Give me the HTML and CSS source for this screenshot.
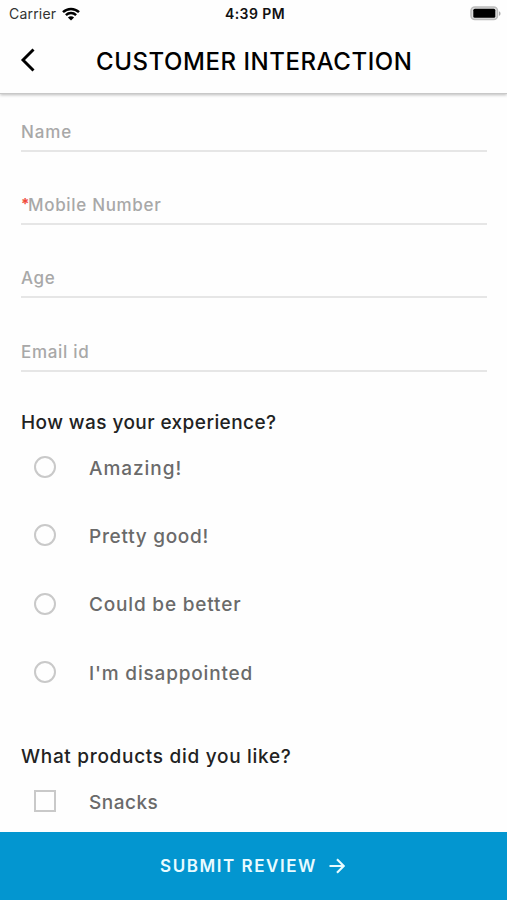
FILE: index.html
```html
<!DOCTYPE html>
<html lang="en">
<head>
<meta charset="utf-8">
<title>Customer Interaction</title>
<link rel="stylesheet" href="styles.css">
</head>
<body>
<div class="screen">
  <div class="status">
    <div class="carrier"><span>Carrier</span>
      <svg class="wifi" width="18" height="14" viewBox="0 0 18 14" fill="none" stroke="#000" stroke-width="2.5"><path d="M1 5.200C5.500.8 12.500.8 17 5.200M3.900 8.200c2.900-2.800 7.300-2.800 10.200 0"/><path d="M9 13.500 5.900 10.400c1.700-1.600 4.500-1.600 6.200 0z" fill="#000" stroke="none"/></svg>
    </div>
    <span class="time">4:39 PM</span>
    <svg class="battery" width="31" height="15" viewBox="0 0 31 15"><rect x="1" y="1" width="26.500" height="12.500" rx="3.800" fill="#ddd" stroke="#bcbcbc" stroke-width="1.500"/><rect x="3.300" y="2.800" width="22" height="9" rx="1.500" fill="#000"/><path d="M29 5.200c2 .8 2 3.800 0 4.600z" fill="#aaa"/></svg>
  </div>
  <header class="header">
    <svg class="back" width="16" height="24" viewBox="0 0 16 24" fill="none" stroke="#000" stroke-width="2.900"><path d="M13.500 1.500 3 12l10.500 10.500"/></svg>
    <h1 class="title">CUSTOMER INTERACTION</h1>
  </header>
  <main class="content">
    <div class="field"><span class="label name">Name</span></div>
    <div class="field"><span class="required">*</span><span class="label mobile">Mobile Number</span></div>
    <div class="field"><span class="label age">Age</span></div>
    <div class="field"><span class="label email">Email id</span></div>
    <h2 class="question experience">How was your experience?</h2>
    <div class="options">
      <div class="option"><span class="radio"></span><span class="amazing">Amazing!</span></div>
      <div class="option"><span class="radio"></span><span class="good">Pretty good!</span></div>
      <div class="option"><span class="radio"></span><span class="better">Could be better</span></div>
      <div class="option"><span class="radio"></span><span class="disappointed">I'm disappointed</span></div>
    </div>
    <h2 class="question products">What products did you like?</h2>
    <div class="options">
      <div class="option"><span class="checkbox"></span><span class="snacks">Snacks</span></div>
    </div>
  </main>
  <footer class="submit"><span>SUBMIT REVIEW</span>
    <svg width="16" height="16" viewBox="0 0 16 16" fill="none" stroke="#e9fbff" stroke-width="2.100"><path d="M.5 8h14M8 1.200 14.700 8 8 14.800"/></svg>
  </footer>
</div>
</body>
</html>
```
FILE: styles.css
```css
* { box-sizing: border-box; }
body { margin: 0; background: #fefefe; font-family: Inter, sans-serif; }
.screen { width: 507px; height: 900px; display: flex; flex-direction: column; overflow: hidden; }
.status { flex: none; height: 27px; display: grid; grid-template-columns: 1fr auto 1fr; align-items: center; padding: 0 6px 0 9px; font-size: 14px; color: #333; }
.carrier { display: flex; align-items: center; gap: 6px; letter-spacing: .2px; }
.time { font-size: 14px; font-weight: 600; letter-spacing: .4px; color: #111; }
.battery { justify-self: end; }
.header { flex: none; height: 67px; display: flex; align-items: center; padding-left: 20px; border-bottom: 1px solid #c8c8c8; box-shadow: 0 1px 3px #bbb; clip-path: inset(0 0 -6px 0); }
.title { margin: 2px 0 0 60px; font-size: 24px; font-weight: 500; letter-spacing: .55px; white-space: nowrap; color: #000; }
.content { flex: 1; min-height: 0; overflow: hidden; padding: 0 20px 0 21px; }
.field { height: 73.200px; display: flex; align-items: flex-end; padding-bottom: 7px; border-bottom: 2px solid #e6e6e6; font-size: 17px; line-height: 22px; font-weight: 500; color: #a8a8a8; }
.field:first-child { height: 58px; }
.label { letter-spacing: .68px; }
.name { letter-spacing: .9px; }
.required { width: 7px; color: #f04a3a; font-size: 15px; font-weight: 700; line-height: 24px; }
.question { margin: 0; font-size: 19px; font-weight: 500; line-height: 24px; color: #222; white-space: nowrap; }
.experience { margin-top: 39px; letter-spacing: .43px; }
.options { display: grid; grid-auto-rows: 68.400px; }
.option { display: flex; align-items: flex-start; padding: 21px 0 0 13px; gap: 33px; font-size: 19px; line-height: 26px; font-weight: 500; color: #6a6a6a; white-space: nowrap; letter-spacing: .82px; }
.amazing { letter-spacing: .95px; }
.good { letter-spacing: .72px; }
.snacks { letter-spacing: .5px; }
.radio, .checkbox { flex: none; width: 22px; height: 22px; border: 2px solid #c9c9c9; margin-top: .2px; }
.radio { border-radius: 50%; }
.products { margin-top: 37px; letter-spacing: .7px; }
.submit { flex: none; height: 68px; display: flex; align-items: center; justify-content: center; gap: 12px; padding: 0 2px 0 0; background: #0396d0; color: #e9fbff; font-size: 17px; font-weight: 600; letter-spacing: 1.550px; }
```
